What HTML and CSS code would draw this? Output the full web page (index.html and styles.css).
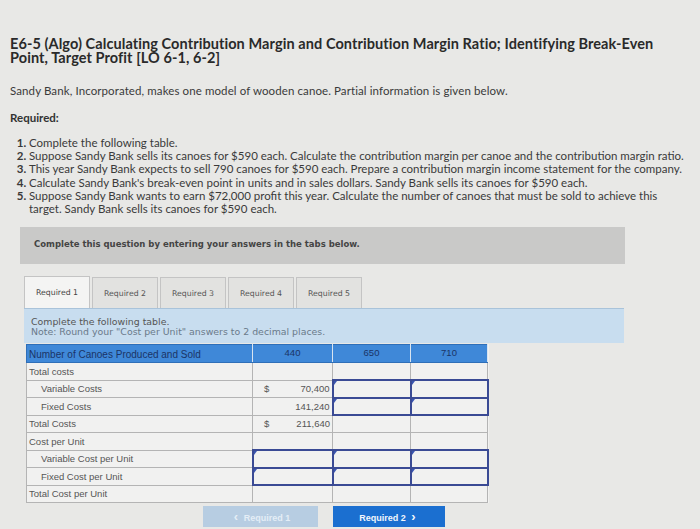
FILE: index.html
```html
<!DOCTYPE html>
<html lang="en">
<head>
<meta charset="utf-8">
<title>E6-5 (Algo)</title>
<link rel="stylesheet" href="styles.css">
</head>
<body>
<h1 class="title">E6-5 (Algo) Calculating Contribution Margin and Contribution Margin Ratio; Identifying Break-Even Point, Target Profit [LO 6-1, 6-2]</h1>
<p class="intro">Sandy Bank, Incorporated, makes one model of wooden canoe. Partial information is given below.</p>
<p class="req-label">Required:</p>
<ol class="req-list">
  <li>Complete the following table.</li>
  <li>Suppose Sandy Bank sells its canoes for $590 each. Calculate the contribution margin per canoe and the contribution margin ratio.</li>
  <li>This year Sandy Bank expects to sell 790 canoes for $590 each. Prepare a contribution margin income statement for the company.</li>
  <li>Calculate Sandy Bank's break-even point in units and in sales dollars. Sandy Bank sells its canoes for $590 each.</li>
  <li>Suppose Sandy Bank wants to earn $72,000 profit this year. Calculate the number of canoes that must be sold to achieve this target. Sandy Bank sells its canoes for $590 each.</li>
</ol>
<div class="instruction">Complete this question by entering your answers in the tabs below.</div>
<div class="workspace">
  <div class="tabs">
    <div class="tab active">Required 1</div>
    <div class="tab">Required 2</div>
    <div class="tab">Required 3</div>
    <div class="tab">Required 4</div>
    <div class="tab">Required 5</div>
  </div>
  <div class="panel-head">
    <div>Complete the following table.</div>
    <div class="note">Note: Round your "Cost per Unit" answers to 2 decimal places.</div>
  </div>
  <table class="grid">
    <colgroup><col class="c-label"><col class="c-num"><col class="c-num2"><col class="c-num3"></colgroup>
    <thead>
      <tr><th class="lab">Number of Canoes Produced and Sold</th><th>440</th><th>650</th><th>710</th></tr>
    </thead>
    <tbody>
      <tr><td>Total costs</td><td></td><td></td><td></td></tr>
      <tr><td class="ind">Variable Costs</td><td><div class="val"><span>$</span><span>70,400</span></div></td><td class="in"></td><td class="in"></td></tr>
      <tr><td class="ind">Fixed Costs</td><td><div class="val"><span></span><span>141,240</span></div></td><td class="in"></td><td class="in"></td></tr>
      <tr><td>Total Costs</td><td><div class="val"><span>$</span><span>211,640</span></div></td><td></td><td></td></tr>
      <tr><td>Cost per Unit</td><td></td><td></td><td></td></tr>
      <tr><td class="ind">Variable Cost per Unit</td><td class="in"></td><td class="in"></td><td class="in"></td></tr>
      <tr><td class="ind">Fixed Cost per Unit</td><td class="in"></td><td class="in"></td><td class="in"></td></tr>
      <tr><td>Total Cost per Unit</td><td></td><td></td><td></td></tr>
    </tbody>
  </table>
  <div class="nav">
    <button class="btn prev" type="button"><span class="chev">&lsaquo;</span> Required 1</button>
    <button class="btn next" type="button">Required 2 <span class="chev">&rsaquo;</span></button>
  </div>
</div>
</body>
</html>
```
FILE: styles.css
```css
html, body {
  margin: 0;
  padding: 0;
}
body {
  background: #e8e8e6;
  padding: 0 10px;
  font-family: Lato, "Open Sans", sans-serif;
  color: #333;
  width: 680px;
  height: 529px;
  overflow: hidden;
}
.title {
  margin: 0;
  padding-top: 37px;
  width: 660px;
  font-size: 14.5px;
  line-height: 13.5px;
  font-weight: 700;
  color: #2a2a2a;
  letter-spacing: 0.08px;
}
.intro {
  margin: 20px 0 0;
  font-size: 11.5px;
  line-height: 14px;
  letter-spacing: 0.1px;
  color: #3a3a3a;
}
.req-label {
  margin: 13px 0 0;
  font-size: 11.5px;
  line-height: 14px;
  font-weight: 700;
  color: #333;
}
.req-list {
  margin: 11px 0 0;
  padding-left: 19px;
  font-size: 11.5px;
  line-height: 13.2px;
  color: #3a3a3a;
}
.req-list li::marker {
  font-weight: 700;
}
.instruction {
  margin: 12px 0 0 10px;
  width: 605px;
  height: 37px;
  box-sizing: border-box;
  padding: 12px 0 0 14px;
  background: #c9c9c8;
  font-family: "DejaVu Sans", Verdana, sans-serif;
  font-size: 8.5px;
  font-weight: 700;
  color: #444;
}
.workspace {
  margin: 12px 0 0 14px;
  width: 600px;
}
.tabs {
  display: flex;
  align-items: flex-end;
  gap: 2px;
}
.tab {
  width: 66px;
  height: 31px;
  box-sizing: border-box;
  border: 1px solid #c4c4c4;
  border-bottom: none;
  background: #e2e2e0;
  font-family: "DejaVu Sans", Verdana, sans-serif;
  font-size: 7.8px;
  color: #555;
  display: flex;
  align-items: center;
  justify-content: center;
}
.tab.active {
  height: 32px;
  background: #f4f4f3;
  color: #444;
}
.panel-head {
  height: 35px;
  box-sizing: border-box;
  padding: 8px 0 0 7px;
  background: #c8ddef;
  border-top: 1px solid #a9c3da;
  font-family: "DejaVu Sans", Verdana, sans-serif;
  font-size: 9.4px;
  line-height: 10px;
  color: #555;
}
.panel-head .note {
  color: #6a7a8a;
}
.grid {
  margin: 1px 0 0 2px;
  width: 461px;
  border-collapse: collapse;
  table-layout: fixed;
  font-family: "Liberation Sans", Arial, sans-serif;
  font-size: 9.5px;
  color: #555;
  background: #f1f1f0;
}
.c-label { width: 226px; }
.c-num { width: 80px; }
.c-num2 { width: 78px; }
.c-num3 { width: 77px; }
.grid th {
  height: 18px;
  background: #3f88d8;
  color: #1b3466;
  font-weight: 400;
  font-size: 9.5px;
  border: 1px solid #2f6fb8;
  border-right: 1px solid #d8e4f0;
  padding: 0;
  vertical-align: top;
  padding-top: 2px;
  box-sizing: border-box;
}
.grid th.lab {
  text-align: left;
  font-size: 10px;
  padding: 4px 0 0 2px;
}
.grid td {
  height: 17.5px;
  box-sizing: border-box;
  border: 1px solid #b4b4b4;
  padding: 0 2px;
  vertical-align: middle;
}
.grid td.ind {
  padding-left: 14px;
}
.val {
  display: flex;
  justify-content: space-between;
  padding: 0 0 0 9px;
}
.grid td.in {
  position: relative;
  border: 2px solid #3a4a94;
}
.grid td.in::before {
  content: "";
  position: absolute;
  top: 0;
  left: 0;
  border-top: 4px solid #3a55b0;
  border-right: 3px solid transparent;
}
.nav {
  display: flex;
  justify-content: center;
  align-items: flex-start;
  gap: 15px;
  margin-top: 3px;
}
.btn {
  height: 21px;
  border: none;
  padding: 0;
  font-family: "Liberation Sans", Arial, sans-serif;
  font-size: 9px;
  font-weight: 700;
}
.btn.prev {
  width: 115px;
  background: #b7cde2;
  color: #e4edf6;
}
.btn.next {
  width: 112px;
  background: #1b6fd0;
  color: #f2f6fc;
}
.chev {
  font-size: 13px;
  font-weight: 700;
  margin: 0 3px;
}
```
